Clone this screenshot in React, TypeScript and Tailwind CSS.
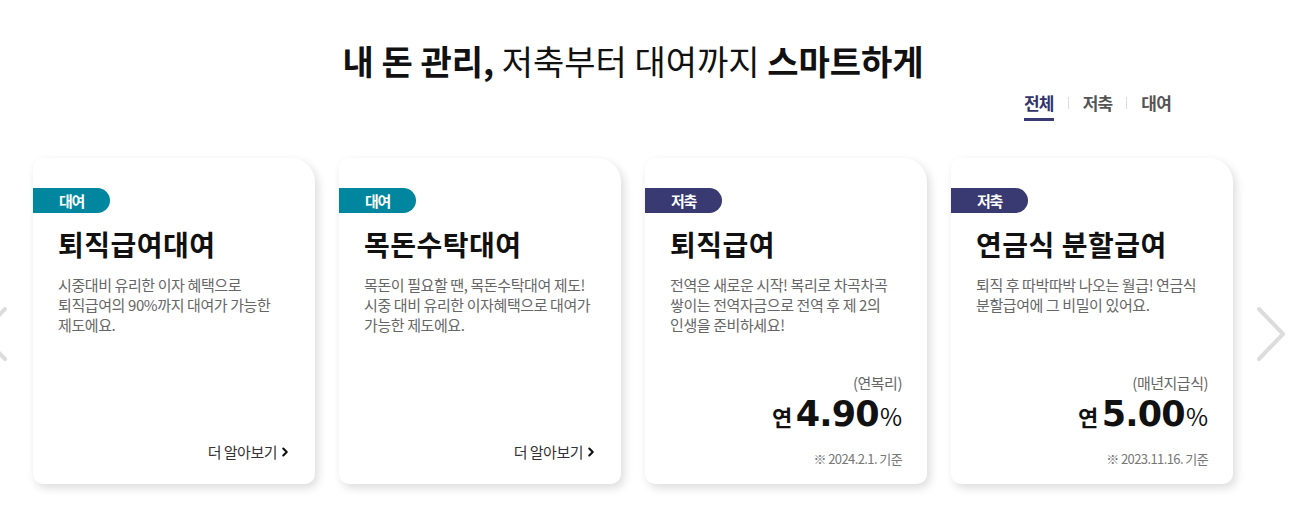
import { ChevronRight } from "lucide-react";

type Card = {
  tag: string;
  tagColor: string;
  title: string;
  desc: string[];
  rate?: { label: string; value: string; date: string };
};

const cards: Card[] = [
  {
    tag: "대여",
    tagColor: "bg-[#00869e]",
    title: "퇴직급여대여",
    desc: ["시중대비 유리한 이자 혜택으로", "퇴직급여의 90%까지 대여가 가능한", "제도에요."],
  },
  {
    tag: "대여",
    tagColor: "bg-[#00869e]",
    title: "목돈수탁대여",
    desc: ["목돈이 필요할 땐, 목돈수탁대여 제도!", "시중 대비 유리한 이자혜택으로 대여가", "가능한 제도에요."],
  },
  {
    tag: "저축",
    tagColor: "bg-[#393a71]",
    title: "퇴직급여",
    desc: ["전역은 새로운 시작! 복리로 차곡차곡", "쌓이는 전역자금으로 전역 후 제 2의", "인생을 준비하세요!"],
    rate: { label: "(연복리)", value: "4.90", date: "※ 2024.2.1. 기준" },
  },
  {
    tag: "저축",
    tagColor: "bg-[#393a71]",
    title: "연금식 분할급여",
    desc: ["퇴직 후 따박따박 나오는 월급! 연금식", "분할급여에 그 비밀이 있어요."],
    rate: { label: "(매년지급식)", value: "5.00", date: "※ 2023.11.16. 기준" },
  },
];

const font = "font-['Noto_Sans_CJK_KR','Noto_Sans',sans-serif]";

const ProductCard = ({ card }: { card: Card }) => {
  return (
    <div className="flex flex-col w-[282px] h-[326px] bg-white rounded-tl-[10px] rounded-tr-[24px] rounded-b-[10px] shadow-[3px_4px_10px_rgba(0,0,0,0.14)] pt-[30px] pb-[15px]">
      <div className={`${card.tagColor} w-[77px] h-[25px] rounded-r-full flex items-center justify-center text-white text-[15px] font-bold tracking-[-1.2px] leading-none`}>
        {card.tag}
      </div>
      <div className="px-[25px] flex flex-col flex-1">
        <h2 className="mt-[12px] text-[28px] font-bold leading-[38px] tracking-[0.5px] text-[#111]">{card.title}</h2>
        <p className="mt-[12px] text-[15px] leading-[20px] tracking-[-0.4px] text-[#666]">
          {card.desc.map((l, i) => (
            <span key={i} className="block whitespace-nowrap">
              {l}
            </span>
          ))}
        </p>
        <div className="mt-auto">
          {card.rate ? (
            <div className="flex flex-col items-end">
              <span className="text-[15px] leading-[20px] tracking-[-0.5px] text-[#666]">{card.rate.label}</span>
              <div className="mt-[4px] flex items-baseline h-[42px] leading-none">
                <span className="text-[22px] font-bold tracking-[-0.5px] text-[#111] mr-[4px]">연</span>
                <span className="font-['DejaVu_Sans',sans-serif] text-[35px] font-bold tracking-[-0.8px] text-[#111]">
                  {card.rate.value}
                </span>
                <span className="text-[24px] text-[#111] ml-[1px]">%</span>
              </div>
              <span className="mt-[10px] text-[13px] leading-[20px] tracking-[-0.6px] text-[#777]">{card.rate.date}</span>
            </div>
          ) : (
            <div className="flex justify-end items-center mb-[7px] mr-[-2px] text-[15px] leading-[20px] tracking-[-0.5px] text-[#333]">
              <span>더 알아보기</span>
              <ChevronRight className="w-[14px] h-[14px] ml-[1px] text-[#111]" strokeWidth={3.6} />
            </div>
          )}
        </div>
      </div>
    </div>
  );
};

const Arrow = ({ dir }: { dir: "left" | "right" }) => (
  <svg width="30" height="56" viewBox="0 0 30 56" fill="none">
    <polyline
      points={dir === "right" ? "3,3 27,28 3,53" : "27,3 3,28 27,53"}
      stroke="#dcdcdc"
      strokeWidth="4"
      strokeLinecap="round"
      strokeLinejoin="round"
    />
  </svg>
);

export default function App() {
  return (
    <div className={`relative w-full h-[525px] bg-white overflow-hidden ${font}`}>
      <div className="ml-[33px] w-[1200px]">
        <h1 className="pt-[41px] text-center text-[34px] leading-[40px] tracking-[0px] text-[#111]">
          <span className="font-bold">내 돈 관리,</span> <span className="font-normal">저축부터 대여까지</span>{" "}
          <span className="font-bold">스마트하게</span>
        </h1>

        <div className="mt-[10px] flex justify-end pr-[62px] items-start">
          {["전체", "저축", "대여"].map((t, i) => (
            <div key={t} className="flex items-start">
              {i > 0 && <span className="mt-[6px] mx-[14px] w-px h-[12px] bg-[#dddddd]" />}
              <div className="flex flex-col items-center">
                <span
                  className={`text-[17px] font-bold leading-[24px] tracking-[-0.8px] ${
                    i === 0 ? "text-[#33336b]" : "text-[#555]"
                  }`}
                >
                  {t}
                </span>
                {i === 0 && <span className="mt-[3px] h-[3px] w-full bg-[#393a71]" />}
              </div>
            </div>
          ))}
        </div>

        <div className="mt-[37px] flex gap-[24px]">
          {cards.map((c, i) => (
            <ProductCard key={i} card={c} />
          ))}
        </div>
      </div>

      <div className="absolute left-[-22px] top-[306px]">
        <Arrow dir="left" />
      </div>
      <div className="absolute left-[1256px] top-[306px]">
        <Arrow dir="right" />
      </div>
    </div>
  );
}
